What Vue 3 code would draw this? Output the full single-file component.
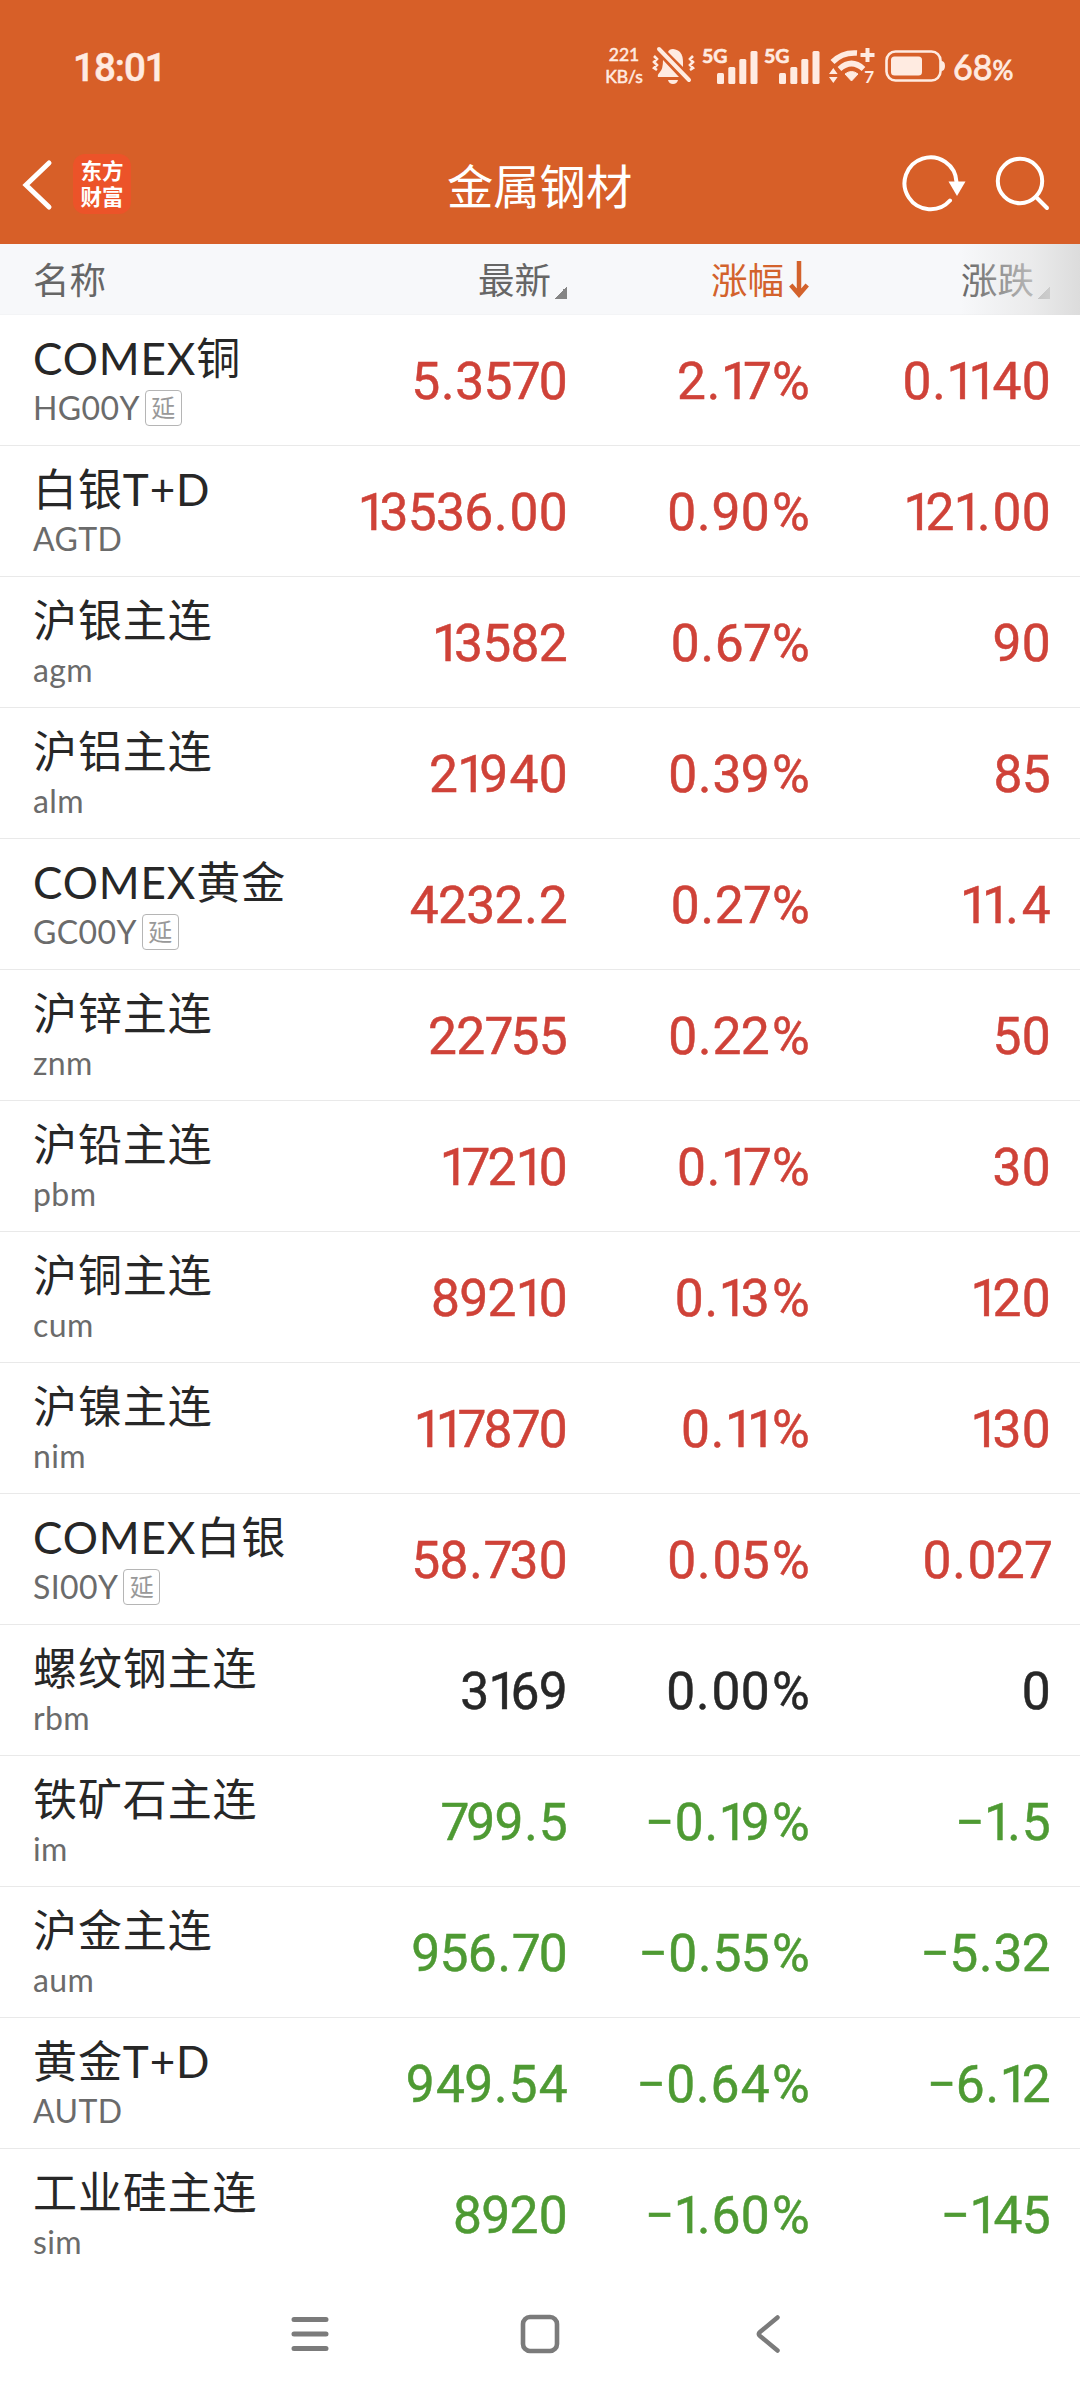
<template>
    <div class="page">
        <div class="status">
            <span class="time">18:01</span>
            <div class="speed"><span>221</span><span>KB/s</span></div>
            <svg class="bell" width="44" height="40" viewBox="0 0 44 40">
                <path d="M16 6 Q17 3 21 3 Q31 4 31 16 V21 Z" fill="currentColor" />
                <path d="M11 14 L27 31 H6 Q5 29 8 26 Q11 23 11 14Z" fill="currentColor" />
                <path d="M16 34 H26 Q25 38 21 38 Q17 38 16 34Z" fill="currentColor" />
                <path d="M7 3 L37 34" stroke="currentColor" stroke-width="4" stroke-linecap="round" />
                <path d="M2 10 L5 13 L2 16 L5 19 L2 22 L5 24 M41 10 L38 13 L41 16 L38 19 L41 22 L38 24"
                    fill="none" stroke="currentColor" stroke-width="2.6" />
            </svg>
            <div v-for="n in 2" :key="n" class="signal">
                <b>5G</b>
                <svg width="42" height="33" viewBox="0 0 42 33">
                    <rect x="0" y="22" width="7" height="11" rx="1.5" />
                    <rect x="11.3" y="16" width="7" height="17" rx="1.5" />
                    <rect x="22.3" y="8" width="7" height="25" rx="1.5" />
                    <rect x="33.5" y="0" width="7" height="33" rx="1.5" />
                </svg>
            </div>
            <div class="wifi">
                <svg width="46" height="38" viewBox="0 0 46 38">
                    <path d="M3.5 15 Q13 5 28 6" fill="none" stroke="currentColor" stroke-width="5.5" />
                    <path d="M10.5 22 Q22.5 11 34.5 22" fill="none" stroke="currentColor" stroke-width="5.5" />
                    <path d="M16 27 Q22.5 22 29 27 L22.5 34 Z" fill="currentColor" stroke="currentColor" />
                    <path d="M38.5 1 V15 M31.5 8 H45.5" stroke="currentColor" stroke-width="4" />
                    <path d="M0 27 L4.3 21 L8.6 27Z M0 30 L4.3 36 L8.6 30Z" fill="currentColor" />
                </svg>
                <b>7</b>
            </div>
            <svg class="battery" width="61" height="33" viewBox="0 0 61 33">
                <rect x="1.5" y="1.5" width="54" height="29" rx="9" fill="none" stroke="currentColor" stroke-width="2.6" />
                <rect x="6" y="6.5" width="31" height="19" rx="3.5" fill="currentColor" />
                <path d="M56 11 Q60 11 60 16 Q60 21 56 21Z" fill="currentColor" />
            </svg>
            <span class="percent">68<small>%</small></span>
        </div>

        <div class="navbar">
            <svg class="back" width="34" height="56" viewBox="0 0 34 56">
                <path d="M28 7 L5 29 L28 51" fill="none" stroke="#fff" stroke-width="5" stroke-linecap="round" />
            </svg>
            <div class="logo"><span>东方</span><span>财富</span></div>
            <h1>金属钢材</h1>
            <svg class="refresh" width="66" height="60" viewBox="0 0 66 60">
                <path d="M54.5 28 A26 26 0 1 0 48 46.5" fill="none" stroke="#fff" stroke-width="4" stroke-linecap="round" />
                <path d="M46.5 27.5 H63.5 L55 42Z" fill="#fff" />
            </svg>
            <svg class="search" width="58" height="60" viewBox="0 0 58 60">
                <circle cx="26" cy="27" r="22.2" fill="none" stroke="#fff" stroke-width="4" />
                <path d="M42 43 L53 54" stroke="#fff" stroke-width="4" stroke-linecap="round" />
            </svg>
        </div>

        <div class="row thead">
            <span class="name">名称</span>
            <span class="cell">最新<i class="corner"></i></span>
            <span class="cell sorted">涨幅<svg width="20" height="37" viewBox="0 0 20 37">
                    <path d="M10 0 V33 M1.8 24 L10 33.5 L18.2 24" fill="none" stroke="currentColor" stroke-width="4.5" />
                </svg></span>
            <span class="cell">涨跌<i class="corner"></i></span>
            <div class="fade"></div>
        </div>

        <div v-for="item in list" :key="item.code" class="row item" :class="color(item)">
            <div class="name">
                <div class="title">{{ item.name }}</div>
                <div class="code">{{ item.code }}<span v-if="item.delay" class="tag">延</span></div>
            </div>
            <span v-for="key in columns" :key="key" class="cell"><span v-for="(c, i) in item[key]" :key="i" :class="spacing[c]">{{ c }}</span></span>
        </div>

        <div class="sysbar">
            <svg width="40" height="44" viewBox="0 0 40 44">
                <path d="M4 7.5 H36 M4 22 H36 M4 36.5 H36" stroke="#7b7b7b" stroke-width="5" stroke-linecap="round" />
            </svg>
            <svg width="40" height="44" viewBox="0 0 40 44">
                <rect x="3" y="5" width="34" height="34" rx="7" fill="none" stroke="#7b7b7b" stroke-width="4.6" />
            </svg>
            <svg width="40" height="44" viewBox="0 0 40 44">
                <path d="M27.5 5.5 L10 20 Q7.5 22 10 24 L27.5 38.5" fill="none" stroke="#7b7b7b" stroke-width="4.5" stroke-linecap="round" />
            </svg>
        </div>
    </div>
</template>

<script setup>
import { ref } from 'vue';

const columns = ['price', 'rate', 'change']

// 数字字距微调
const spacing = { '1': 'one', '.': 'dot', '4': 'four', '0': 'zero', '7': 'seven', '%': 'pct' }

const list = ref([
    { name: 'COMEX铜', code: 'HG00Y', delay: true, price: '5.3570', rate: '2.17%', change: '0.1140' },
    { name: '白银T+D', code: 'AGTD', price: '13536.00', rate: '0.90%', change: '121.00' },
    { name: '沪银主连', code: 'agm', price: '13582', rate: '0.67%', change: '90' },
    { name: '沪铝主连', code: 'alm', price: '21940', rate: '0.39%', change: '85' },
    { name: 'COMEX黄金', code: 'GC00Y', delay: true, price: '4232.2', rate: '0.27%', change: '11.4' },
    { name: '沪锌主连', code: 'znm', price: '22755', rate: '0.22%', change: '50' },
    { name: '沪铅主连', code: 'pbm', price: '17210', rate: '0.17%', change: '30' },
    { name: '沪铜主连', code: 'cum', price: '89210', rate: '0.13%', change: '120' },
    { name: '沪镍主连', code: 'nim', price: '117870', rate: '0.11%', change: '130' },
    { name: 'COMEX白银', code: 'SI00Y', delay: true, price: '58.730', rate: '0.05%', change: '0.027' },
    { name: '螺纹钢主连', code: 'rbm', price: '3169', rate: '0.00%', change: '0' },
    { name: '铁矿石主连', code: 'im', price: '799.5', rate: '−0.19%', change: '−1.5' },
    { name: '沪金主连', code: 'aum', price: '956.70', rate: '−0.55%', change: '−5.32' },
    { name: '黄金T+D', code: 'AUTD', price: '949.54', rate: '−0.64%', change: '−6.12' },
    { name: '工业硅主连', code: 'sim', price: '8920', rate: '−1.60%', change: '−145' }
])

// 涨红跌绿，平盘黑色
function color(item) {
    if (item.change === '0') return 'flat'
    return item.change.startsWith('−') ? 'down' : 'up'
}
</script>

<style>
body {
    margin: 0;
    background: #fff;
}
</style>

<style scoped>
.page {
    width: 1080px;
    height: 2400px;
    overflow: hidden;
    background: #fff;
    font-family: Lato, "Noto Sans CJK SC", sans-serif;
    color: #272727;
}

svg {
    display: block;
    flex: none;
}

.status {
    display: flex;
    align-items: center;
    box-sizing: border-box;
    height: 124px;
    padding: 8px 0 0 73px;
    background: #d75f28;
    color: #ffebe1;
}

.time {
    width: 530px;
    padding-top: 3px;
    font-family: Roboto, sans-serif;
    font-size: 38.5px;
    font-weight: 500;
    letter-spacing: -1px;
    -webkit-text-stroke: 0.5px;
}

.speed {
    display: flex;
    flex-direction: column;
    align-items: center;
    width: 42px;
    margin-right: 7px;
    font-size: 17.5px;
    line-height: 22px;
    -webkit-text-stroke: 0.5px;
}

.bell {
    margin-right: 7px;
}

.signal {
    position: relative;
    width: 55px;
    height: 36px;
    margin-right: 7px;
}

.signal b {
    position: absolute;
    left: -1px;
    top: -1px;
    font-size: 19.5px;
    line-height: 18px;
    -webkit-text-stroke: 0.6px;
}

.signal svg {
    margin: 3px 0 0 14px;
    fill: currentColor;
}

.wifi {
    position: relative;
    margin: 0 10px 0 2px;
}

.wifi b {
    position: absolute;
    right: 1px;
    bottom: 1px;
    font-size: 17px;
    line-height: 15px;
}

.battery {
    margin-right: 7px;
}

.percent {
    font-size: 34px;
    -webkit-text-stroke: 0.8px;
}

.percent small {
    font-size: 26px;
}

.navbar {
    display: flex;
    align-items: center;
    height: 120px;
    background: #d75f28;
}

.back {
    margin-left: 21px;
}

.logo {
    display: flex;
    flex-direction: column;
    align-items: center;
    justify-content: center;
    width: 58px;
    height: 60px;
    margin-left: 18px;
    border-radius: 12px;
    background: #ec5329;
    color: #fff;
    font-size: 21.5px;
    font-weight: 700;
    line-height: 26px;
}

h1 {
    width: 187px;
    margin: 3px 0 0 316px;
    color: #fff;
    font-size: 46.3px;
    font-weight: 400;
    line-height: 60px;
    white-space: nowrap;
}

.refresh {
    margin-left: 268px;
}

.search {
    margin-left: 26px;
}

.row {
    position: relative;
    display: grid;
    grid-template-columns: 300px 234px 242px 241px;
    align-items: center;
    box-sizing: border-box;
    height: 131px;
    padding-left: 33px;
    border-bottom: 1px solid #e9e9e9;
}

.row.item:nth-last-child(2) {
    border-bottom-color: transparent;
}

.cell {
    text-align: right;
    white-space: nowrap;
}

.thead {
    height: 71px;
    padding-top: 2px;
    background: #f7f8fa;
    border-bottom-color: #f3f4f6;
    color: #666;
    font-size: 36.5px;
    line-height: 50px;
}

.thead .cell {
    display: flex;
    justify-content: flex-end;
    align-items: center;
}

.corner {
    width: 13px;
    height: 13px;
    margin: 24px 0 0 3px;
    background: linear-gradient(135deg, transparent 50%, #858585 50%);
}

.sorted {
    color: #d3622c;
}

.sorted svg {
    margin: 0 0 2px 5px;
}

.fade {
    position: absolute;
    top: 0;
    right: 0;
    width: 120px;
    height: 71px;
    background: linear-gradient(90deg, rgba(247, 248, 250, 0), rgba(228, 228, 228, 0.65) 60%, #dcdcdc);
}

.item .cell {
    padding-top: 3px;
    font-family: Roboto, sans-serif;
    font-size: 51.5px;
    letter-spacing: -0.7px;
    -webkit-text-stroke: 0.5px;
}

.one {
    letter-spacing: -7px;
}

.dot {
    padding: 0 1.5px;
}

.four {
    padding-left: 2px;
}

.zero {
    padding-left: 1px;
}

.seven {
    letter-spacing: -3px;
}

.pct {
    padding-left: 3px;
}

.title {
    margin-top: -3px;
    font-size: 44px;
    line-height: 56px;
    letter-spacing: 0.9px;
    white-space: nowrap;
}

.code {
    display: flex;
    align-items: center;
    height: 40px;
    margin-top: 2px;
    color: #6b6b6b;
    font-size: 32px;
    letter-spacing: 0.4px;
}

.tag {
    box-sizing: border-box;
    width: 37px;
    height: 36px;
    margin-left: 5px;
    border: 1.5px solid #b5b5b5;
    border-radius: 4px;
    color: #999;
    font-size: 24px;
    line-height: 33px;
    text-align: center;
}

.up .cell {
    color: #cf4238;
}

.down .cell {
    color: #4e9a33;
}

.flat .cell {
    color: #272727;
}

.sysbar {
    display: flex;
    justify-content: center;
    align-items: center;
    gap: 190px;
    height: 108px;
}
</style>
